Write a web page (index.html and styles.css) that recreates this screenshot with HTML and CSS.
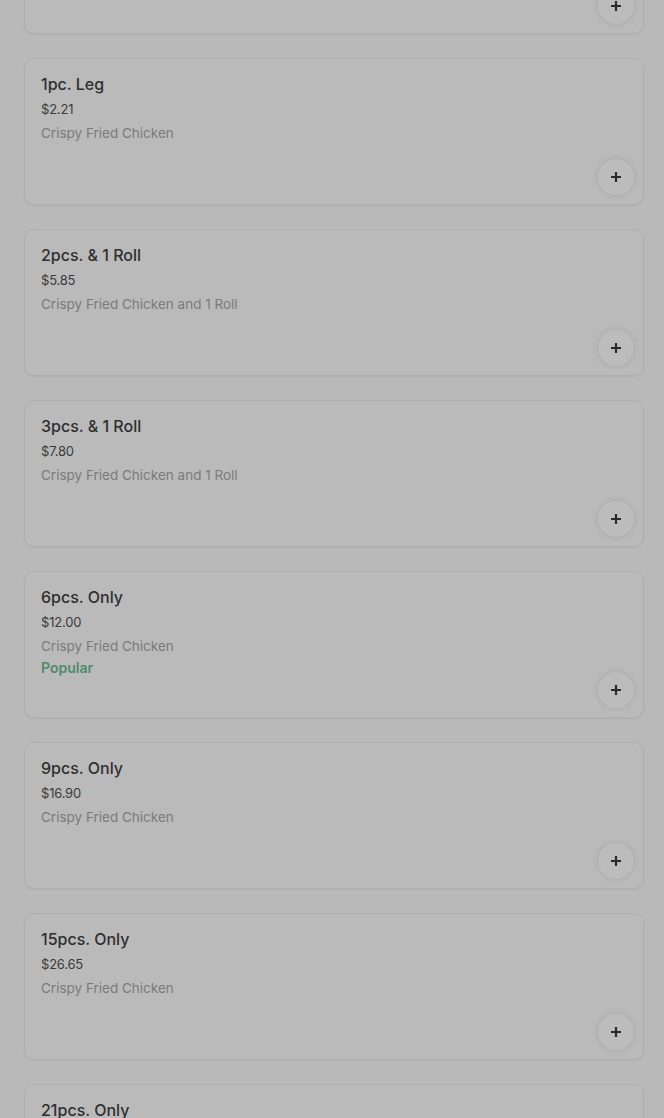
FILE: index.html
```html
<!DOCTYPE html>
<html>
<head>
<meta charset="utf-8">
<link rel="stylesheet" href="styles.css">
</head>
<body>
<div class="list">
  <div class="card">
    <div class="info"></div>
    <button class="add" aria-label="Add">
      <svg width="12" height="12" viewBox="0 0 12 12"><path d="M6 1v10M1 6h10" stroke="#2a2a2a" stroke-width="2.2"/></svg>
    </button>
  </div>
  <div class="card">
    <div class="info">
      <div class="title">1pc. Leg</div>
      <div class="price">$2.21</div>
      <div class="desc">Crispy Fried Chicken</div>
    </div>
    <button class="add" aria-label="Add">
      <svg width="12" height="12" viewBox="0 0 12 12"><path d="M6 1v10M1 6h10" stroke="#2a2a2a" stroke-width="2.2"/></svg>
    </button>
  </div>
  <div class="card">
    <div class="info">
      <div class="title">2pcs. &amp; 1 Roll</div>
      <div class="price">$5.85</div>
      <div class="desc">Crispy Fried Chicken and 1 Roll</div>
    </div>
    <button class="add" aria-label="Add">
      <svg width="12" height="12" viewBox="0 0 12 12"><path d="M6 1v10M1 6h10" stroke="#2a2a2a" stroke-width="2.2"/></svg>
    </button>
  </div>
  <div class="card">
    <div class="info">
      <div class="title">3pcs. &amp; 1 Roll</div>
      <div class="price">$7.80</div>
      <div class="desc">Crispy Fried Chicken and 1 Roll</div>
    </div>
    <button class="add" aria-label="Add">
      <svg width="12" height="12" viewBox="0 0 12 12"><path d="M6 1v10M1 6h10" stroke="#2a2a2a" stroke-width="2.2"/></svg>
    </button>
  </div>
  <div class="card">
    <div class="info">
      <div class="title">6pcs. Only</div>
      <div class="price">$12.00</div>
      <div class="desc">Crispy Fried Chicken</div>
      <div class="tag">Popular</div>
    </div>
    <button class="add" aria-label="Add">
      <svg width="12" height="12" viewBox="0 0 12 12"><path d="M6 1v10M1 6h10" stroke="#2a2a2a" stroke-width="2.2"/></svg>
    </button>
  </div>
  <div class="card">
    <div class="info">
      <div class="title">9pcs. Only</div>
      <div class="price">$16.90</div>
      <div class="desc">Crispy Fried Chicken</div>
    </div>
    <button class="add" aria-label="Add">
      <svg width="12" height="12" viewBox="0 0 12 12"><path d="M6 1v10M1 6h10" stroke="#2a2a2a" stroke-width="2.2"/></svg>
    </button>
  </div>
  <div class="card">
    <div class="info">
      <div class="title">15pcs. Only</div>
      <div class="price">$26.65</div>
      <div class="desc">Crispy Fried Chicken</div>
    </div>
    <button class="add" aria-label="Add">
      <svg width="12" height="12" viewBox="0 0 12 12"><path d="M6 1v10M1 6h10" stroke="#2a2a2a" stroke-width="2.2"/></svg>
    </button>
  </div>
  <div class="card">
    <div class="info">
      <div class="title">21pcs. Only</div>
    </div>
  </div>
</div>
</body>
</html>
```

FILE: styles.css
```css
html, body {
  margin: 0;
  padding: 0;
  background: #b9b9b9;
  height: 1118px;
  overflow: hidden;
}

body {
  font-family: Inter, "Noto Sans", sans-serif;
  color: #2b2b2b;
}

.list {
  display: flex;
  flex-direction: column;
  gap: 24px;
  padding: 0 20px 0 24px;
  margin-top: -113px;
}

.card {
  box-sizing: border-box;
  height: 147px;
  display: flex;
  align-items: stretch;
  padding: 13px 9px 9px 16px;
  background: #bababa;
  border: 1px solid #afafaf;
  border-radius: 10px;
  box-shadow: 0 1px 2px rgba(0, 0, 0, 0.05);
}

.info {
  flex: 1;
  display: flex;
  flex-direction: column;
}

.title {
  font-size: 16px;
  font-weight: 500;
  line-height: 24px;
  color: #2f2f2f;
}

.price {
  margin-top: 1px;
  font-size: 13px;
  line-height: 24px;
  color: #3a3a3a;
  letter-spacing: -0.2px;
}

.desc {
  font-size: 13.5px;
  line-height: 24px;
  color: #7b7b7b;
}

.tag {
  font-size: 14px;
  font-weight: 600;
  line-height: 20px;
  color: #4f8a6f;
}

.add {
  align-self: flex-end;
  width: 36px;
  height: 36px;
  border-radius: 50%;
  border: none;
  padding: 0;
  background: #bcbcbc;
  box-shadow: 0 0 6px rgba(0, 0, 0, 0.1);
  display: flex;
  align-items: center;
  justify-content: center;
}
```
